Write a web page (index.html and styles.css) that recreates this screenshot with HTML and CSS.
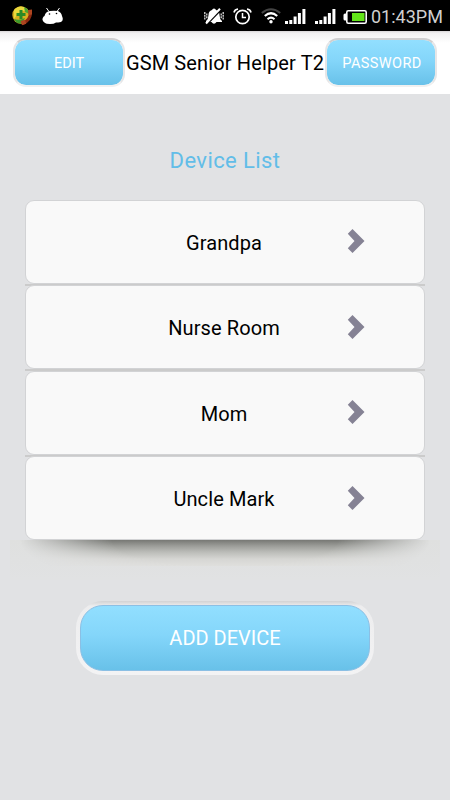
FILE: index.html
```
<!DOCTYPE html>
<html lang="en">
<head>
    <meta charset="UTF-8">
    <meta name="viewport" content="width=device-width, initial-scale=1.0">
    <title>GSM Senior Helper T2</title>
    <link rel="stylesheet" href="styles.css">
</head>
<body>
    <div class="status-bar">
        <svg class="icon-phone" width="24" height="22" viewBox="0 0 24 22">
            <circle cx="10" cy="10" r="8.7" fill="#d9ae20"/>
            <path d="M3 5 Q7 0 13 2 L18 6 Q13 5 10 7 Q5 10 3 14 Z" fill="#ead83c"/>
            <path d="M3 14 Q5 19 11 18.500 L14 13 Q8 16 3 14 Z" fill="#3f9a2c"/>
            <path d="M13 2 Q18 4 18.500 9 L14 7 Z" fill="#4fa52e"/>
            <path d="M8.500 5 h3 v3 h3 v3 h-3 v3 h-3 v-3 h-3 v-3 h3 z" fill="#2b8a26"/>
            <path d="M19.500 6.500 Q20 15 11.500 18.500" fill="none" stroke="#8c2a10" stroke-width="3"/>
            <path d="M17 5 l4 -.5 v5 l-3.500 .5 z M9.500 16 l4.500 -1.200 1.200 4 -4.200 1.400 z" fill="#ad4520"/>
        </svg>
        <svg class="icon-android" width="22" height="18" viewBox="0 0 22 18">
            <path d="M4.500 0 L7 3.500 M17.500 0 L15 3.500" stroke="#fff" stroke-width="1"/>
            <path d="M2.500 8 Q3.500 3.500 8 3 Q12 2.300 16 3 Q19.500 4.500 20 8 Q22 12.500 19 14 Q16 14.500 14 14.500 Q12 16 8 16 Q4 16 3 15 Q-.5 13 .8 10 Q1.200 8.500 2.500 8 Z" fill="#fff"/>
            <circle cx="7.500" cy="6" r=".8"/>
            <circle cx="14.500" cy="5.500" r=".8"/>
        </svg>
        <svg class="icon-mute" width="20" height="17" viewBox="0 0 20 17">
            <path d="M10 .5 Q11.500 .5 12 2 Q15.500 3.200 15.500 7 Q15.500 11 18 13 V14 H2 V13 Q4.500 11 4.500 7 Q4.500 3.200 8 2 Q8.500 .5 10 .5 Z M7.500 14 h5 q-2.500 3.500 -5 0 z" fill="#fff"/>
            <path d="M2.500 16.500 L17 1.500" stroke="#000" stroke-width="2"/>
            <path d="M2 15.500 L16 .8" stroke="#fff" stroke-width="2"/>
            <path d="M.8 4 v8 M2.800 5.500 v5 M17.200 5.500 v5 M19.200 4 v8" stroke="#ddd" stroke-width="1.300" stroke-dasharray="2 .7"/>
        </svg>
        <svg class="icon-alarm" width="19" height="17" viewBox="0 0 19 17">
            <circle cx="9.500" cy="9" r="6.700" fill="none" stroke="#fff" stroke-width="1.700"/>
            <path d="M9.500 5 V9.500 H13" fill="none" stroke="#fff" stroke-width="1.500"/>
            <path d="M1 4.500 Q1.500 1.500 5 1 M18 4.500 Q17.500 1.500 14 1" fill="none" stroke="#fff" stroke-width="1.600"/>
        </svg>
        <svg class="icon-wifi" width="20" height="16" viewBox="0 0 20 16">
            <path d="M.8 5 Q10 -2.500 19.200 5" fill="none" stroke="#444" stroke-width="2"/>
            <path d="M3.800 8 Q10 2.500 16.200 8" fill="none" stroke="#fff" stroke-width="2.200"/>
            <path d="M6.500 11.200 Q10 8 13.500 11.200" fill="none" stroke="#fff" stroke-width="2"/>
            <circle cx="10" cy="13.800" r="1.700" fill="#fff"/>
        </svg>
        <svg class="icon-signal" width="21" height="15" viewBox="0 0 21 15">
            <path d="M1.500 12 v3 M5.800 11 v4 M10.100 7.500 v7.500 M14.400 4 v11 M18.900 0 v15" stroke="#fff" stroke-width="3"/>
        </svg>
        <svg class="icon-signal second" width="21" height="15" viewBox="0 0 21 15">
            <path d="M1.500 12 v3 M5.800 11 v4 M10.100 7.500 v7.500 M14.400 4 v11 M18.900 0 v15" stroke="#fff" stroke-width="3"/>
        </svg>
        <svg class="icon-battery" width="24" height="14" viewBox="0 0 24 14">
            <rect x="3.800" y=".8" width="19.400" height="12.400" rx="1.500" fill="none" stroke="#fff" stroke-width="1.600"/>
            <path d="M3.500 3.500 H2 Q.5 3.500 .5 5 V9 Q.5 10.500 2 10.500 H3.500 Z" fill="#fff"/>
            <rect x="9" y="3" width="12.500" height="8" fill="#63e619"/>
        </svg>
        <span class="clock">01:43PM</span>
    </div>

    <div class="header">
        <button class="small-button">EDIT</button>
        <h1>GSM Senior Helper T2</h1>
        <button class="small-button password">PASSWORD</button>
    </div>

    <h2>Device List</h2>

    <div class="device-list">
        <div class="device">
            <span>Grandpa</span>
            <svg class="arrow" width="18" height="26" viewBox="0 0 18 26"><path d="M5.500 1 L17.500 13 L5.500 25 L.8 20.300 L7.500 13 L.8 5.700 Z"/></svg>
        </div>
        <div class="device">
            <span>Nurse Room</span>
            <svg class="arrow" width="18" height="26" viewBox="0 0 18 26"><path d="M5.500 1 L17.500 13 L5.500 25 L.8 20.300 L7.500 13 L.8 5.700 Z"/></svg>
        </div>
        <div class="device">
            <span>Mom</span>
            <svg class="arrow" width="18" height="26" viewBox="0 0 18 26"><path d="M5.500 1 L17.500 13 L5.500 25 L.8 20.300 L7.500 13 L.8 5.700 Z"/></svg>
        </div>
        <div class="device">
            <span>Uncle Mark</span>
            <svg class="arrow" width="18" height="26" viewBox="0 0 18 26"><path d="M5.500 1 L17.500 13 L5.500 25 L.8 20.300 L7.500 13 L.8 5.700 Z"/></svg>
        </div>
    </div>
    <div class="list-shadow"></div>

    <div class="add-box">
        <button class="add-button">ADD DEVICE</button>
    </div>
</body>
</html>
```
FILE: styles.css
```
* {
    margin: 0;
    padding: 0;
    box-sizing: border-box;
    font-family: Roboto, sans-serif;
}
body {
    width: 450px;
    height: 800px;
    overflow: hidden;
    background: #e1e2e4;
    color: #000;
}
svg {
    display: block;
    flex: none;
}
h1, h2 {
    font-weight: normal;
}

/* Status bar */
.status-bar {
    display: flex;
    align-items: flex-start;
    height: 31px;
    background: #000;
}
.icon-phone {
    margin: 5px 0 0 11px;
}
.icon-android {
    margin: 8px 0 0 7px;
}
.icon-mute {
    margin: 8px 0 0 140px;
}
.icon-alarm {
    margin: 8px 0 0 9px;
}
.icon-wifi {
    margin: 8px 0 0 9px;
}
.icon-signal {
    margin: 9px 0 0 4px;
}
.icon-signal.second {
    margin-left: 9px;
}
.icon-battery {
    margin: 10px 0 0 7px;
}
.clock {
    margin: 6px 0 0 4px;
    color: #d0d0d0;
    font-size: 18px;
    line-height: 22px;
    white-space: nowrap;
}

/* Header */
.header {
    display: flex;
    justify-content: space-between;
    height: 63px;
    padding: 7px 13px 0;
    background: linear-gradient(to bottom, #d8d5d7 0, #f1f0f1 2px, #fff 12px);
}
.header h1 {
    margin: 0 -4px;
    font-size: 20px;
    line-height: 50px;
    letter-spacing: 0.13px;
    white-space: nowrap;
}
button {
    color: #fff;
    background: linear-gradient(to bottom, #92dfff 0%, #84d6fa 45%, #68c1e9 100%);
    border: none;
}
.small-button {
    width: 112px;
    height: 49px;
    padding-top: 2px;
    border: 2px solid;
    border-color: #cfcfd0 #e6e6e7 #f0f0f0;
    border-radius: 13px;
    background-clip: padding-box;
    font-size: 14.5px;
}
.small-button.password {
    padding-left: 2px;
    letter-spacing: 0.4px;
}

h2 {
    margin-top: 54px;
    color: #62bde8;
    font-size: 22px;
    line-height: 26px;
    letter-spacing: 0.4px;
    text-align: center;
}

/* Device list */
.device-list {
    margin: 25.5px 25px 0;
}
.device {
    display: flex;
    align-items: center;
    position: relative;
    height: 84px;
    margin-bottom: 1.67px;
    border: 1.5px solid #d2d3d5;
    border-radius: 9px;
    background: #f9f9f9;
}
.device:not(:last-child)::after {
    content: "";
    position: absolute;
    left: -1px;
    right: -1px;
    bottom: -3px;
    height: 2px;
    background: #cbcbcb;
}
.device span {
    flex: 1;
    padding: 2px 0 0 99px;
    font-size: 20px;
    letter-spacing: 0.1px;
    text-align: center;
}
.arrow {
    margin: -1px 59px 0 24px;
    fill: #858294;
}
.device:last-child {
    margin-bottom: 0;
}
.list-shadow {
    position: relative;
    height: 40px;
    margin: 0 10px;
    background: linear-gradient(to bottom, #dfe0df, #e1e2e3);
}
/* dark band that fades out to both sides */
.list-shadow::before {
    content: "";
    display: block;
    height: 26px;
    background: linear-gradient(to bottom, #777874 0, #9c9d99 6px, #bbbcb8 12px, #d6d6d3 19px, #dfdfdd 26px);
    -webkit-mask-image: radial-gradient(ellipse 205px 50px at 50% 0, #000 55%, transparent 100%);
    mask-image: radial-gradient(ellipse 205px 50px at 50% 0, #000 55%, transparent 100%);
}

/* Add button */
.add-box {
    width: 298px;
    height: 74px;
    margin: 20.5px auto 0;
    padding: 4px;
    border-radius: 27px;
    background: linear-gradient(to bottom, #d2d2d3, #ededee 5px, #f3f3f4);
}
.add-button {
    display: block;
    width: 290px;
    height: 66px;
    border: 1px solid #8bbfe4;
    border-radius: 23px;
    font-size: 20px;
}
```
